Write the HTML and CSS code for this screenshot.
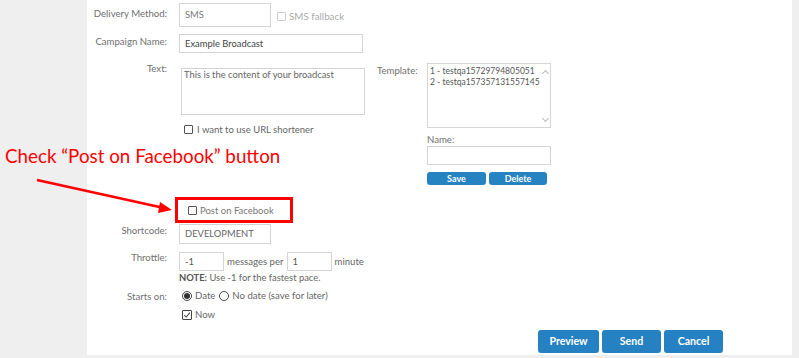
FILE: index.html
```html
<!DOCTYPE html>
<html>
<head>
<meta charset="utf-8">
<link rel="stylesheet" href="styles.css">
</head>
<body>
<div class="page">
  <div class="panel">
    <div class="row r-delivery">
      <div class="lbl">Delivery Method:</div>
      <div class="ctl">
        <div class="field f-sms">SMS</div>
        <span class="cb cb-light"></span><span class="cbtext light">SMS fallback</span>
      </div>
    </div>
    <div class="row r-campaign">
      <div class="lbl">Campaign Name:</div>
      <div class="ctl"><div class="field f-campaign">Example Broadcast</div></div>
    </div>
    <div class="row r-text">
      <div class="lbl">Text:</div>
      <div class="ctl textblock">
        <div class="textcol">
          <div class="field f-textarea">This is the content of your broadcast</div>
          <div class="cbline url"><span class="cb"></span><span class="cbtext">I want to use URL shortener</span></div>
        </div>
        <div class="tplcol">
          <div class="tpllbl">Template:</div>
          <div class="tplctl">
            <div class="field f-select">
              <div class="opts">
                <div>1 - testqa15729794805051</div>
                <div>2 - testqa157357131557145</div>
              </div>
              <div class="scroll"><span class="chev up"></span><span class="chev down"></span></div>
            </div>
            <div class="namelbl">Name:</div>
            <div class="field f-name"></div>
            <div class="smallbtns"><span class="sbtn b-save">Save</span><span class="sbtn b-del">Delete</span></div>
          </div>
        </div>
      </div>
    </div>
    <div class="row r-fb">
      <div class="lbl"></div>
      <div class="ctl fbctl"><span class="cb"></span><span class="cbtext">Post on Facebook</span></div>
    </div>
    <div class="row r-short">
      <div class="lbl">Shortcode:</div>
      <div class="ctl"><div class="field f-short">DEVELOPMENT</div></div>
    </div>
    <div class="row r-throttle">
      <div class="lbl">Throttle:</div>
      <div class="ctl">
        <div class="thline">
          <div class="field f-num">-1</div><span class="txt">messages per</span><div class="field f-num">1</div><span class="txt">minute</span>
        </div>
        <div class="note"><b>NOTE:</b> Use -1 for the fastest pace.</div>
      </div>
    </div>
    <div class="row r-starts">
      <div class="lbl">Starts on:</div>
      <div class="ctl">
        <div class="radios"><span class="radio on"></span><span class="txt t-date">Date</span><span class="radio"></span><span class="txt">No date (save for later)</span></div>
        <div class="nowline"><span class="cb checked"><svg viewBox="0 0 10 10" width="8" height="8"><path d="M1.5 5.2 L4 7.6 L8.6 2" fill="none" stroke="#444" stroke-width="1.3"/></svg></span><span class="txt">Now</span></div>
      </div>
    </div>
    <div class="actions">
      <span class="btn">Preview</span><span class="btn">Send</span><span class="btn">Cancel</span>
    </div>
  </div>
  <div class="annot">Check “Post on Facebook” button</div>
  <svg class="arrow" width="180" height="50" viewBox="0 0 180 50">
    <line x1="37" y1="5" x2="164" y2="33" stroke="#ff0000" stroke-width="2.6"/>
    <polygon points="172,35 160,27 158,38" fill="#ff0000"/>
  </svg>
  <div class="redbox"></div>
</div>
</body>
</html>
```
FILE: styles.css
```css
html, body { margin: 0; padding: 0; }
body {
  background: #efefef;
  font-family: "Lato", "Noto Sans", sans-serif;
  width: 799px;
  height: 358px;
  overflow: hidden;
}
.page {
  position: relative;
  padding: 0 7px 0 87px;
  height: 358px;
}
.panel {
  background: #fff;
  width: 705px;
  height: 355px;
  box-sizing: border-box;
  padding-top: 3px;
}
.row { display: flex; }
.lbl {
  width: 80px;
  flex: none;
  text-align: right;
  font-size: 9.6px;
  color: #6f6f6f;
  padding-top: 5px;
  margin-right: 12px;
}
.ctl { display: flex; align-items: flex-start; }
.field {
  border: 1px solid #d4d4d4;
  box-sizing: border-box;
  font-size: 9.4px;
  color: #555;
  padding-left: 5px;
  background: #fff;
}
.f-sms { width: 92px; height: 24px; line-height: 22px; color: #777; }
.cb {
  display: inline-flex;
  align-items: center;
  justify-content: center;
  width: 9px;
  height: 9px;
  border: 1px solid #555;
  border-radius: 1px;
  box-sizing: border-box;
  flex: none;
}
.cb-light { border-color: #ccc; width: 9px; height: 9px; margin: 9px 0 0 6px; }
.cbtext { font-size: 9.5px; color: #666; margin-left: 3px; }
.cbtext.light { color: #aaa; font-size: 9.8px; margin-top: 7px; margin-left: 3px; }
.r-campaign { margin-top: 7px; }
.r-campaign .lbl { padding-top: 2px; }
.f-campaign { width: 184px; height: 19px; line-height: 17px; color: #444; }
.r-text { margin-top: 10px; }
.r-text .lbl { padding-top: 0; margin-right: 14px; }
.textblock { align-items: flex-start; }
.textcol { margin-top: 5px; width: 184px; }
.f-textarea { width: 184px; height: 47px; line-height: 12px; padding: 0 0 0 2px; color: #666; }
.cbline { display: flex; align-items: center; }
.url { margin: 9px 0 0 3px; }
.url .cbtext { margin-left: 4px; font-size: 9.5px; color: #666; }
.tplcol { display: flex; margin-left: 12px; }
.tpllbl { font-size: 9.6px; color: #6f6f6f; width: 50px; padding-top: 2px; }
.tplctl { width: 124px; }
.f-select {
  width: 124px;
  height: 65px;
  display: flex;
  justify-content: space-between;
  padding-left: 2px;
}
.opts { font-size: 8.5px; line-height: 11px; color: #555; padding-top: 2px; white-space: nowrap; }
.scroll { width: 12px; flex: none; display: flex; flex-direction: column; justify-content: space-between; align-items: center; padding: 5px 0 4px; }
.chev { width: 4px; height: 4px; border-left: 1px solid #bbb; border-top: 1px solid #bbb; }
.chev.up { transform: rotate(45deg); margin-top: 2px; }
.chev.down { transform: rotate(225deg); margin-bottom: 2px; }
.namelbl { font-size: 9.6px; color: #6f6f6f; margin-top: 6px; line-height: 12px; }
.f-name { width: 124px; height: 19px; margin-top: 0; }
.smallbtns { display: flex; gap: 3px; margin-top: 7px; }
.sbtn {
  background: #2583c2;
  color: #fff;
  font-weight: bold;
  font-size: 9px;
  height: 13px;
  line-height: 13px;
  text-align: center;
  border-radius: 3px;
}
.b-save { width: 59px; }
.b-del { width: 58px; }
.r-fb { margin-top: 20px; }
.fbctl { align-items: center; margin-left: 9px; }
.fbctl .cbtext { color: #777; font-size: 9.5px; margin-left: 3px; }
.r-short { margin-top: 8px; }
.r-short .lbl { padding-top: 1px; }
.f-short { width: 92px; height: 20px; line-height: 18px; color: #666; }
.r-throttle { margin-top: 8px; }
.r-throttle .lbl { padding-top: 0; }
.r-throttle .ctl { flex-direction: column; }
.thline { display: flex; align-items: center; }
.f-num { width: 45px; height: 19px; line-height: 17px; color: #555; }
.txt { font-size: 9.6px; color: #666; margin: 0 3px; }
.note { font-size: 9.4px; color: #666; margin-top: 1px; }
.note b { color: #555; }
.r-starts { margin-top: 7px; }
.r-starts .lbl { padding-top: 1px; }
.r-starts .ctl { flex-direction: column; padding-left: 3px; }
.radios { display: flex; align-items: center; }
.radio {
  width: 10px; height: 10px; border-radius: 50%; border: 1px solid #444; box-sizing: border-box;
  display: inline-flex; align-items: center; justify-content: center;
}
.radio.on::after { content: ""; width: 6px; height: 6px; border-radius: 50%; background: #333; }
.t-date { margin-right: 4px; }
.nowline { display: flex; align-items: center; margin-top: 8px; }
.cb.checked { width: 10px; height: 10px; border-color: #444; }
.actions { display: flex; gap: 3px; margin: 10px 0 0 451px; }
.btn {
  background: #2581c1;
  color: #fff;
  font-weight: bold;
  font-size: 10.6px;
  height: 23px;
  line-height: 23px;
  width: 59px;
  text-align: center;
  border-radius: 3px;
}
.btn:first-child { width: 61px; }
.annot {
  position: absolute;
  left: 5px;
  top: 144px;
  color: #ff0000;
  font-family: "Lato", "Open Sans", sans-serif;
  font-size: 18.8px;
  white-space: nowrap;
}
.arrow { position: absolute; left: 0; top: 175px; }
.redbox {
  position: absolute;
  left: 175px;
  top: 197px;
  width: 118px;
  height: 26px;
  box-sizing: border-box;
  border: 3px solid #ff0000;
}
```
